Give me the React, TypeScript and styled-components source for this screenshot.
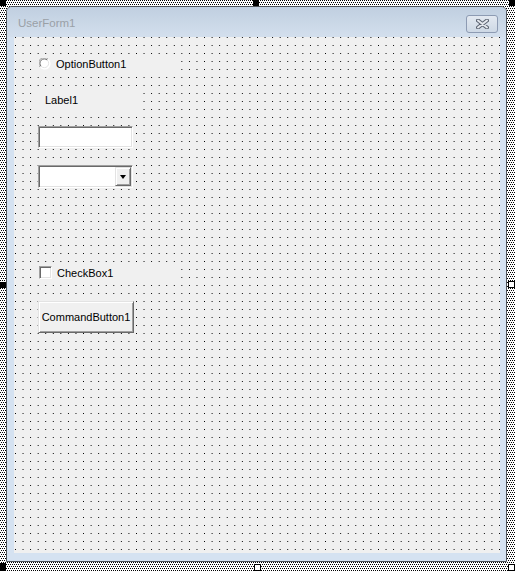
import React from "react";
import styled, { createGlobalStyle } from "styled-components";

const Global = createGlobalStyle`
  html, body { margin: 0; padding: 0; background: #fff; }
  body { font-family: "Liberation Sans", Arial, sans-serif; }
`;

const Screen = styled.div`
  position: relative;
  box-sizing: border-box;
  width: 515px;
  height: 571px;
  padding: 6px 8px 9px 6px;
  display: flex;
  background:
    conic-gradient(from 0deg at 1px 1px, transparent 0 75%, #000 0) 1px 2px / 2px 4px,
    conic-gradient(from 0deg at 1px 1px, #fff 0 75%, #000 0) 0 0 / 2px 4px;
`;

const Handle = styled.div<{ $x: number; $y: number; $w: number; $h: number; $open?: boolean }>`
  position: absolute;
  box-sizing: border-box;
  left: ${(p) => p.$x}px;
  top: ${(p) => p.$y}px;
  width: ${(p) => p.$w}px;
  height: ${(p) => p.$h}px;
  background: ${(p) => (p.$open ? "#fff" : "#000")};
  border: 1px solid #000;
`;

const Window = styled.div`
  flex: 1;
  display: flex;
  flex-direction: column;
  border: 1px solid #4e5358;
  border-radius: 6px 6px 0 0;
  background: #d5e2f1;
  overflow: hidden;
`;

const TitleBar = styled.div`
  height: 30px;
  flex: none;
  display: flex;
  align-items: center;
  justify-content: space-between;
  padding: 0 8px 0 11px;
  background: linear-gradient(#c0cfe0, #d3dfed);
`;

const TitleText = styled.span`
  font-size: 11.5px;
  color: #9aa0a6;
  margin-top: 2px;
`;

const CloseButton = styled.div`
  box-sizing: border-box;
  width: 32px;
  height: 18px;
  margin-top: 3px;
  border: 1px solid #8d9bb3;
  border-radius: 3px;
  background: linear-gradient(#e3e9f1, #cdd8e5);
  display: flex;
  align-items: center;
  justify-content: center;
`;

const Frame = styled.div`
  flex: 1;
  display: flex;
  padding: 0 6px 8px 7px;
`;

const Client = styled.div`
  flex: 1;
  display: flex;
  flex-direction: column;
  align-items: flex-start;
  padding: 17px 0 0 23px;
  background-color: #000;
  background-image: linear-gradient(to right, transparent 1px, #f0f0f0 1px),
    linear-gradient(to bottom, transparent 1px, #f0f0f0 1px);
  background-size: 7.5625px 8px;
  background-position: 1px 0;
  font-size: 11px;
  color: #000;
`;

const ChoiceRow = styled.div<{ $mt: number; $h: number }>`
  box-sizing: border-box;
  margin-top: ${(p) => p.$mt}px;
  width: 144px;
  height: ${(p) => p.$h}px;
  display: flex;
  align-items: center;
  gap: 5px;
  padding-left: 2px;
  background: #f0f0f0;
`;

const CheckSquare = styled.div`
  box-sizing: border-box;
  width: 13px;
  height: 13px;
  background: #fff;
  border: 1px solid;
  border-color: #a0a0a0 #fff #fff #a0a0a0;
  box-shadow: inset 1px 1px #696969, inset -1px -1px #e3e3e3;
`;

const Label = styled.div<{ $mt: number }>`
  box-sizing: border-box;
  margin-top: ${(p) => p.$mt}px;
  width: 103px;
  height: 25px;
  display: flex;
  align-items: center;
  padding-left: 8px;
  background: #f0f0f0;
`;

const TextBox = styled.div<{ $mt: number }>`
  box-sizing: border-box;
  margin-top: ${(p) => p.$mt}px;
  margin-left: 1px;
  width: 95px;
  height: 22px;
  background: #fff;
  border: 1px solid;
  border-color: #a0a0a0 #fff #fff #a0a0a0;
  box-shadow: inset 1px 1px #696969, inset -1px -1px #e3e3e3;
`;

const Combo = styled(TextBox)`
  height: 23px;
  display: flex;
  justify-content: flex-end;
  padding: 1px;
`;

const DropButton = styled.div`
  box-sizing: border-box;
  width: 16px;
  height: 100%;
  background: #f0f0f0;
  border: 1px solid;
  border-color: #e3e3e3 #696969 #696969 #e3e3e3;
  box-shadow: inset 1px 1px #fff, inset -1px -1px #a0a0a0;
  display: flex;
  align-items: center;
  justify-content: center;
  padding-top: 1px;
`;

const Arrow = styled.div`
  width: 0;
  height: 0;
  border-left: 3.5px solid transparent;
  border-right: 3.5px solid transparent;
  border-top: 4px solid #000;
`;

const CommandButton = styled.div<{ $mt: number }>`
  box-sizing: border-box;
  margin-top: ${(p) => p.$mt}px;
  margin-left: 1px;
  width: 96px;
  height: 32px;
  display: flex;
  align-items: center;
  justify-content: center;
  background: #f0f0f0;
  border: 1px solid;
  border-color: #e3e3e3 #696969 #696969 #e3e3e3;
  box-shadow: inset 1px 1px #fff, inset -1px -1px #a0a0a0;
`;

const Radio = () => (
  <svg width="12" height="12" viewBox="0 0 12 12">
    <circle cx="6" cy="6" r="5.5" fill="#fff" />
    <path d="M1.2 9.2 A5.3 5.3 0 0 1 9.2 1.2" fill="none" stroke="#a0a0a0" strokeWidth="1" />
    <path d="M2.2 8.4 A4.3 4.3 0 0 1 8.4 2.2" fill="none" stroke="#696969" strokeWidth="1" />
    <path d="M9.2 1.2 A5.3 5.3 0 0 1 1.2 9.2" fill="none" stroke="#fff" strokeWidth="1" />
    <path d="M8.4 2.2 A4.3 4.3 0 0 1 2.2 8.4" fill="none" stroke="#e3e3e3" strokeWidth="1" />
  </svg>
);

const CloseGlyph = () => (
  <svg width="13" height="10" viewBox="0 0 13 10">
    <path d="M2 1.5 L11 8.5 M11 1.5 L2 8.5" stroke="#5d6573" strokeWidth="4" strokeLinecap="round" />
    <path d="M2 1.5 L11 8.5 M11 1.5 L2 8.5" stroke="#e4e8ee" strokeWidth="2" strokeLinecap="round" />
  </svg>
);

export default function App() {
  return (
    <>
      <Global />
      <Screen>
        <Window>
          <TitleBar>
            <TitleText>UserForm1</TitleText>
            <CloseButton>
              <CloseGlyph />
            </CloseButton>
          </TitleBar>
          <Frame>
            <Client>
              <ChoiceRow $mt={0} $h={20}>
                <Radio />
                <span>OptionButton1</span>
              </ChoiceRow>
              <Label $mt={13}>Label1</Label>
              <TextBox $mt={14} />
              <Combo $mt={17}>
                <DropButton>
                  <Arrow />
                </DropButton>
              </Combo>
              <ChoiceRow $mt={74} $h={21}>
                <CheckSquare />
                <span>CheckBox1</span>
              </ChoiceRow>
              <CommandButton $mt={18}>CommandButton1</CommandButton>
            </Client>
          </Frame>
        </Window>
        <Handle $x={0} $y={0} $w={6} $h={6} />
        <Handle $x={253} $y={0} $w={6} $h={6} />
        <Handle $x={509} $y={0} $w={6} $h={6} />
        <Handle $x={0} $y={282} $w={6} $h={6} />
        <Handle $x={0} $y={563} $w={6} $h={8} />
        <Handle $x={508} $y={281} $w={7} $h={7} $open />
        <Handle $x={254} $y={564} $w={7} $h={7} $open />
        <Handle $x={508} $y={564} $w={7} $h={7} $open />
      </Screen>
    </>
  );
}
